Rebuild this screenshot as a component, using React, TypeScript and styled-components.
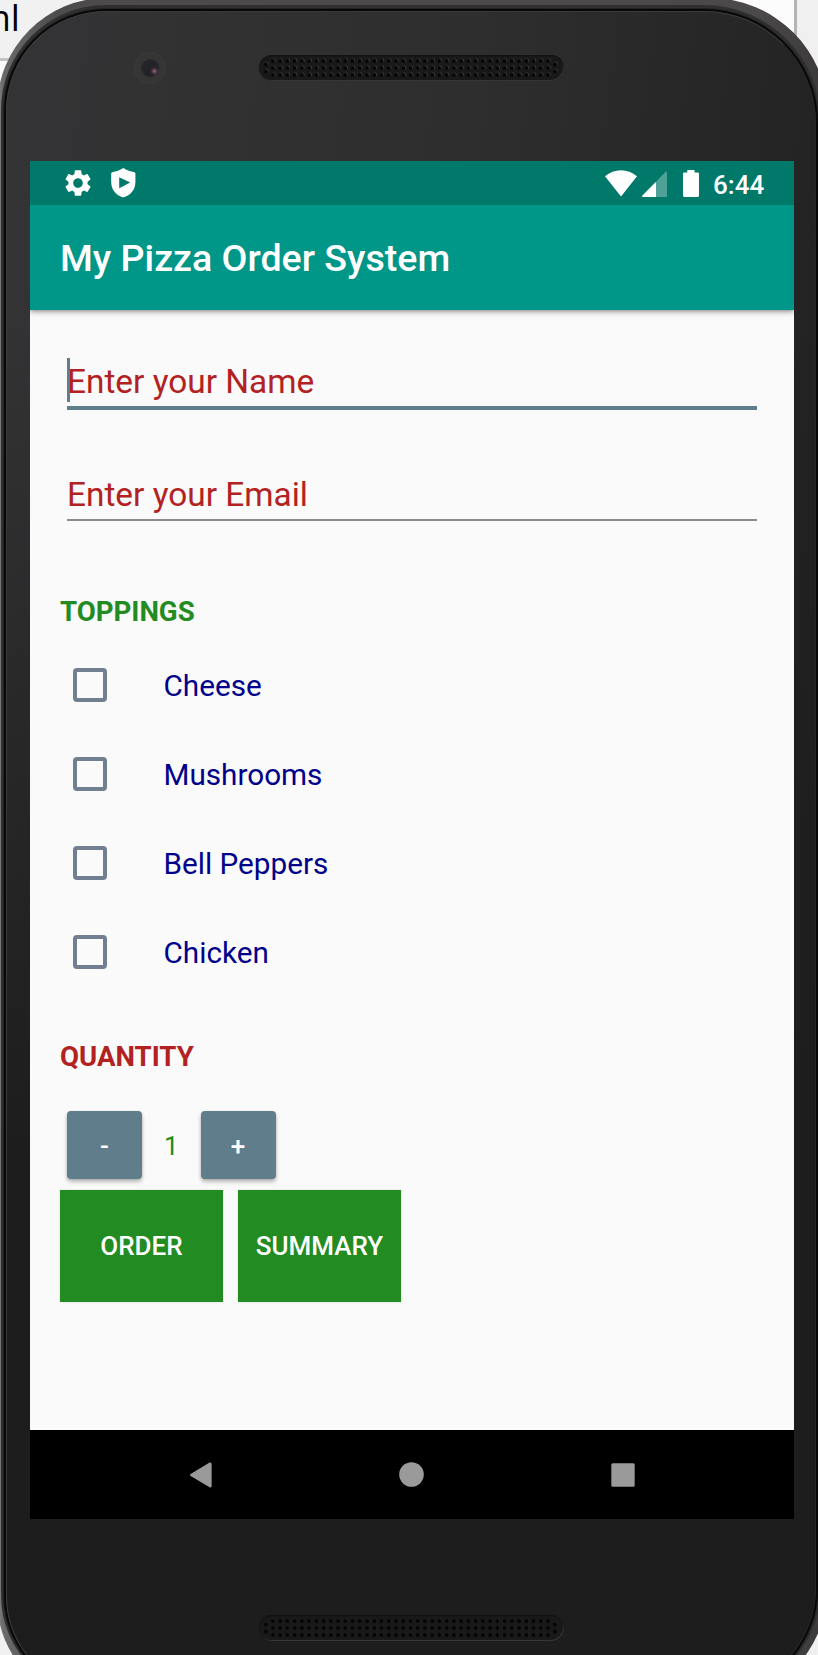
import React, { useState } from "react";
import styled, { createGlobalStyle } from "styled-components";
import { MdSettings } from "react-icons/md";

const GlobalStyle = createGlobalStyle`
  * { box-sizing: border-box; }
  body { margin: 0; font-family: Roboto, sans-serif; }
  button { font-family: inherit; border: 0; padding: 0; margin: 0; }
`;

const Desktop = styled.div`
  position: relative;
  width: 818px;
  height: 1655px;
  overflow: hidden;
  background: #f0f0f0;
`;

const EditorSheet = styled.div`
  position: absolute;
  top: 0;
  left: 0;
  width: 797px;
  height: 300px;
  background: #fcfcfc;
  border-right: 3px solid #b4b4b4;
`;

const EditorTab = styled.div`
  position: absolute;
  top: 0;
  left: 0;
  width: 200px;
  height: 61px;
  background: #f1f1f1;
  border-bottom: 3px solid #c4c4c4;
  color: #000;
  font: 36px/36px "Open Sans", sans-serif;
  text-indent: -22.5px;
`;

const Phone = styled.div`
  position: relative;
  width: 831px;
  height: 1706px;
  margin: -2px 0 0 -3px;
  padding: 13px 12px 12px 9px;
  border-radius: 110px 118px 118px 104px;
  background: linear-gradient(90deg, #8a8a8a 0, #6c6a6a 6px, #4d4b4b 60px, #4b4949 760px, #3a3838 100%);
`;

const Face = styled.div`
  height: 100%;
  display: flex;
  flex-direction: column;
  border-radius: 100px 112px 104px 96px;
  border: 1px solid #3a3a3b;
  border-right-color: #262626;
  box-shadow: 0 0 0 2px #080808, 0 0 0 3px #222, 0 0 0 4px #303030, 0 -1px 0 5px #303030;
  background:
    linear-gradient(180deg, transparent 300px, #1d1d1e 1150px),
    linear-gradient(98deg, #343436 0, #2e2e2e 45%, #222 85%, #1e1e1e 100%);
`;

const TopBezel = styled.div`
  display: flex;
  height: 149px;
  padding: 40px 0 0 127px;
`;

const Camera = styled.div`
  width: 32px;
  height: 32px;
  margin-right: 93px;
  border-radius: 50%;
  border: 1px solid #3b3a3a;
  display: grid;
  place-items: center;
  background: #353536;
`;

const Lens = styled.div`
  width: 18px;
  height: 18px;
  border-radius: 50%;
  background: radial-gradient(circle at 75% 68%, #a06a70 0, #55404a 2px, #24222a 4px, #242329 60%, #302b30 100%);
`;

const BottomBezel = styled.div`
  display: flex;
  padding: 96px 0 0 252px;
`;

const SpeakerSlot = styled.div<{ $top?: boolean }>`
  width: 305px;
  height: 26px;
  margin-top: ${(p) => (p.$top ? "3px" : "0")};
  border-radius: 13px;
  background: #191919;
  box-shadow: inset 0 1px 1px #111, inset -1px -1px 0 #363636;
`;

const Screen = styled.div`
  width: 764px;
  height: 1358px;
  margin-left: 23px;
  display: flex;
  flex-direction: column;
  background: #fafafa;
  flex: none;
`;

const StatusBar = styled.div`
  height: 44px;
  padding: 0 30px 0 32px;
  display: flex;
  align-items: center;
  background: #00796b;
  color: #fff;
  svg { display: block; flex: none; }
`;

const StatusSpacer = styled.div`
  flex: 1;
`;

const Clock = styled.span`
  margin-left: 13px;
  font-size: 26px;
  font-weight: 500;
  line-height: 44px;
  width: 52px;
  padding: 3px 0 0 1px;
  white-space: nowrap;
`;

const Toolbar = styled.header`
  height: 104.5px;
  padding: 0 30px;
  background: #009688;
  color: #fff;
  font-size: 37.6px;
  font-weight: 500;
  line-height: 107px;
  box-shadow: 0 1px 4px rgba(0, 0, 0, 0.35), 0 3px 6px rgba(0, 0, 0, 0.15);
  clip-path: inset(0 0 -12px 0);
`;

const Form = styled.main`
  flex: 1;
  padding: 48px 30px 0;
`;

const Field = styled.div<{ $focused?: boolean }>`
  position: relative;
  height: ${(p) => (p.$focused ? "52px" : "51px")};
  margin: 0 7px ${(p) => (p.$focused ? "60px" : "0")};
  border-bottom: ${(p) => (p.$focused ? "4px solid #607d8b" : "2px solid #8b8b8b")};
  color: #b22222;
  font-size: 33.4px;
  line-height: ${(p) => (p.$focused ? "48px" : "50px")};
`;

const Cursor = styled.span`
  position: absolute;
  left: 0;
  top: 0;
  width: 3px;
  height: 44px;
  background: #607d8b;
`;

const SectionTitle = styled.h2<{ $color: string }>`
  margin: 0;
  font-size: 27.6px;
  font-weight: 700;
  line-height: 34px;
  color: ${(p) => p.$color};
`;

const Toppings = styled.div`
  margin: 11px 0 44px;
`;

const ToppingsSection = styled.section`
  padding-top: 74px;
`;

const ToppingRow = styled.label`
  display: flex;
  align-items: center;
  height: 89px;
  padding-left: 12px;
  color: #00008b;
  font-size: 29.7px;
  line-height: 36px;
`;

const ToppingName = styled.span`
  padding-top: 3px;
`;

const Box = styled.span<{ $checked: boolean }>`
  width: 34px;
  height: 34px;
  margin: 1px 57px 0 0.5px;
  border: 4px solid #708090;
  border-radius: 4px;
  background: ${(p) => (p.$checked ? "#708090" : "transparent")};
`;

const Stepper = styled.div`
  display: flex;
  align-items: center;
  margin: 36px 0 10px 7px;
`;

const StepButton = styled.button`
  width: 75px;
  height: 68px;
  border-radius: 4px;
  background: #607d8b;
  color: #fff;
  font-size: 26px;
  font-weight: 500;
  line-height: 68px;
  padding-top: 1px;
  box-shadow: 0 3px 4px rgba(0, 0, 0, 0.24), 0 1px 3px rgba(0, 0, 0, 0.12);
`;

const Count = styled.span`
  width: 58.5px;
  text-align: center;
  color: #228b22;
  font-size: 26px;
  line-height: 68px;
  padding-top: 2px;
`;

const Actions = styled.div`
  display: flex;
  gap: 15px;
`;

const ActionButton = styled.button`
  width: 163px;
  height: 112px;
  background: #228b22;
  color: #fff;
  font-size: 26px;
  font-weight: 500;
  line-height: 112px;
  box-shadow: 0 0 2px rgba(0, 0, 0, 0.15);
`;

const NavBar = styled.nav`
  height: 89px;
  display: flex;
  align-items: center;
  gap: 187px;
  padding-left: 160px;
  background: #000;
  svg { display: block; }
`;

const columns = Array.from({ length: 39 }, (_, i) => 14 + i * 7.24);
const holes = [
  ...columns.flatMap((x) => [6, 13, 20].map((y) => [x, y])),
  [7, 9.5], [7, 16.5], [296, 9.5], [296, 16.5],
];

function Speaker({ top, shine }: { top?: boolean; shine: string }) {
  return (
    <SpeakerSlot $top={top}>
      <svg width="305" height="26">
        {holes.map(([x, y]) => (
          <g key={`${x}-${y}`}>
            <circle cx={x + 0.6} cy={y - 0.5} r="2" fill={shine} />
            <circle cx={x} cy={y} r="1.9" fill="#050505" />
          </g>
        ))}
      </svg>
    </SpeakerSlot>
  );
}

const ShieldPlayIcon = () => (
  <svg width="25" height="30" viewBox="0 0 25 30">
    <path
      fill="#fff"
      fillRule="evenodd"
      d="M12.3 0C9 2.2 5 3.6 1.2 4.2Q.2 4.4.2 5.4V14C.2 21.8 5 27.2 12.3 29.6C19.6 27.2 24.4 21.8 24.4 14V5.4Q24.4 4.4 23.4 4.2C19.6 3.6 15.6 2.2 12.3 0ZM8.2 9.2L19.2 14.6L8.2 20.2Z"
    />
  </svg>
);

const WifiIcon = () => (
  <svg width="32" height="27" viewBox="0 0 32 27">
    <path fill="#fff" d="M0 6.2C9 -1.8 23 -1.8 32 6.2L16.8 25.6Q16 26.6 15.2 25.6Z" />
  </svg>
);

const SignalIcon = () => (
  <svg width="25" height="26" viewBox="0 0 25 26">
    <path fill="#fff" fillOpacity=".3" d="M14 10.8L23.6.7Q25 0 25 1.4V24.8Q25 26 24 26H14Z" />
    <path fill="#fff" d="M14 10.8V26H1Q-.6 25.6.4 24.6Z" />
  </svg>
);

const BatteryIcon = () => (
  <svg width="16" height="27" viewBox="0 0 16 27">
    <path fill="#fff" d="M4.3 0H11.5V2.6H14.8Q16 2.6 16 3.8V25.6Q16 27 14.8 27H1.2Q0 27 0 25.6V3.8Q0 2.6 1.2 2.6H4.3Z" />
  </svg>
);

const StatusIcons = styled.div`
  display: flex;
  align-items: flex-end;
  .signal { margin-left: 5px; }
  .battery { margin-left: 16px; }
`;

const LeadingIcons = styled.div`
  display: flex;
  align-items: center;
  gap: 17px;
`;

const TOPPINGS = ["Cheese", "Mushrooms", "Bell Peppers", "Chicken"];

export default function App() {
  const [quantity, setQuantity] = useState(1);
  const [picked, setPicked] = useState<string[]>([]);
  const toggle = (name: string) =>
    setPicked((p) => (p.includes(name) ? p.filter((n) => n !== name) : [...p, name]));

  return (
    <Desktop>
      <GlobalStyle />
      <EditorSheet />
      <EditorTab>ml</EditorTab>
      <Phone>
        <Face>
          <TopBezel>
            <Camera><Lens /></Camera>
            <Speaker top shine="#444" />
          </TopBezel>
          <Screen>
            <StatusBar>
              <LeadingIcons>
                <MdSettings size={32} />
                <ShieldPlayIcon />
              </LeadingIcons>
              <StatusSpacer />
              <StatusIcons>
                <WifiIcon />
                <span className="signal"><SignalIcon /></span>
                <span className="battery"><BatteryIcon /></span>
              </StatusIcons>
              <Clock>6:44</Clock>
            </StatusBar>
            <Toolbar>My Pizza Order System</Toolbar>
            <Form>
              <Field $focused><Cursor />Enter your Name</Field>
              <Field>Enter your Email</Field>
              <ToppingsSection>
                <SectionTitle $color="#228b22">TOPPINGS</SectionTitle>
                <Toppings>
                  {TOPPINGS.map((name) => (
                    <ToppingRow key={name} onClick={() => toggle(name)}>
                      <Box $checked={picked.includes(name)} />
                      <ToppingName>{name}</ToppingName>
                    </ToppingRow>
                  ))}
                </Toppings>
              </ToppingsSection>
              <SectionTitle $color="#b22222">QUANTITY</SectionTitle>
              <Stepper>
                <StepButton onClick={() => setQuantity((q) => Math.max(1, q - 1))}>-</StepButton>
                <Count>{quantity}</Count>
                <StepButton onClick={() => setQuantity((q) => q + 1)}>+</StepButton>
              </Stepper>
              <Actions>
                <ActionButton>ORDER</ActionButton>
                <ActionButton>SUMMARY</ActionButton>
              </Actions>
            </Form>
            <NavBar>
              <svg width="22" height="26" viewBox="0 0 22 26">
                <path fill="#9a9a9a" d="M.6 11.9L19.6.6Q21.6 0 21.6 2V24Q21.6 26 19.6 25.3L.6 14.1Q-.6 13 .6 11.9Z" />
              </svg>
              <svg width="25" height="25" viewBox="0 0 25 25">
                <circle cx="12.5" cy="12.5" r="12.3" fill="#9a9a9a" />
              </svg>
              <svg width="24" height="24" viewBox="0 0 24 24">
                <rect x=".3" y=".3" width="23.4" height="23.4" rx="1.5" fill="#9a9a9a" />
              </svg>
            </NavBar>
          </Screen>
          <BottomBezel>
            <Speaker shine="#222" />
          </BottomBezel>
        </Face>
      </Phone>
    </Desktop>
  );
}
